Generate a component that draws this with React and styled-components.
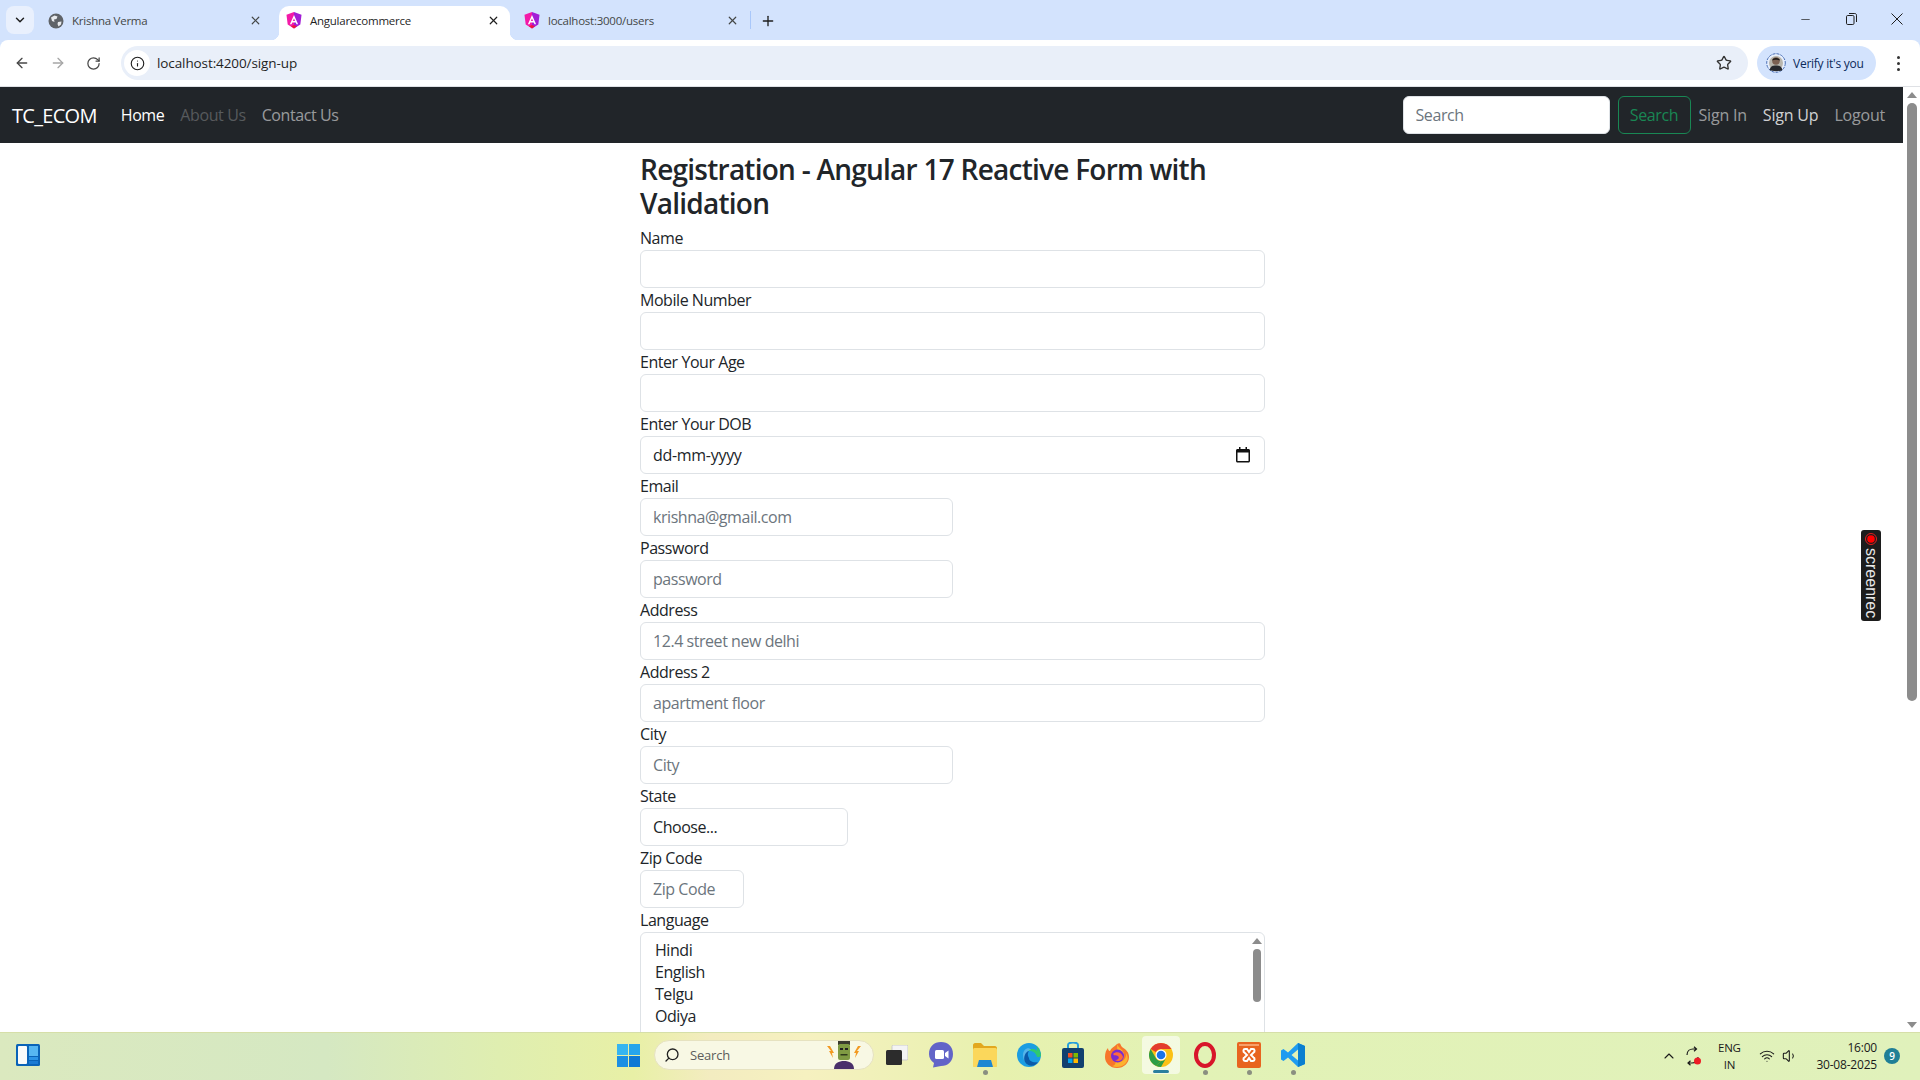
import React from "react";
import styled, { createGlobalStyle } from "styled-components";
import { ArrowLeft, ArrowRight, RotateCw, Info, Star, X, Plus, ChevronDown, Minus, ChevronUp, Search as SearchIcon, Wifi, Volume1 } from "lucide-react";

const GlobalStyle = createGlobalStyle`
  html, body {
    margin: 0;
    height: 100%;
    overflow: hidden;
  }
  body {
    font-family: "Open Sans", "Noto Sans", sans-serif;
    color: #212529;
  }
  * {
    box-sizing: border-box;
  }
`;

const Screen = styled.div`
  width: 1920px;
  height: 1080px;
  display: flex;
  flex-direction: column;
  overflow: hidden;
  background: #d3e3fd;
`;

/* browser chrome */
const TabStrip = styled.div`
  height: 40px;
  flex: none;
  background: #d3e3fd;
  display: flex;
  align-items: flex-end;
  padding-left: 6px;
`;

const TabMenu = styled.div`
  width: 28px;
  height: 28px;
  margin: 0 6px 6px 0;
  border-radius: 8px;
  background: #e9f0fd;
  display: flex;
  align-items: center;
  justify-content: center;
  color: #1f1f1f;
`;

const Tab = styled.div`
  position: relative;
  width: ${(p) => p.$width}px;
  height: 34px;
  display: flex;
  align-items: center;
  gap: 8px;
  padding: 0 ${(p) => p.$right}px 5px ${(p) => p.$left}px;
  border-radius: 10px 10px 0 0;
  background: ${(p) => (p.$active ? "#fff" : "transparent")};
  font-size: 11.5px;
  letter-spacing: -0.25px;
  color: ${(p) => (p.$active ? "#1f1f1f" : "#444746")};
  ${(p) =>
    p.$active &&
    `
    &::before, &::after {
      content: "";
      position: absolute;
      bottom: 0;
      width: 8px;
      height: 8px;
    }
    &::before {
      left: -8px;
      background: radial-gradient(circle at 0 0, transparent 8px, #fff 8.5px);
    }
    &::after {
      right: -8px;
      background: radial-gradient(circle at 100% 0, transparent 8px, #fff 8.5px);
    }
  `}
`;

const TabTitle = styled.span`
  flex: 1;
  white-space: nowrap;
`;

const TabDivider = styled.div`
  width: 1px;
  height: 18px;
  background: #a8c7fa;
  margin: 0 9px 11px 0;
`;

const NewTab = styled.div`
  height: 34px;
  display: flex;
  align-items: center;
  padding-bottom: 4px;
  color: #1f1f1f;
`;

const WindowControls = styled.div`
  margin-left: auto;
  height: 40px;
  display: flex;
  align-items: center;
  padding-right: 17px;
  padding-bottom: 2px;
  gap: 34px;
  color: #1f1f1f;
`;

const Toolbar = styled.div`
  height: 46px;
  flex: none;
  display: flex;
  align-items: center;
  background: #fff;
  border-radius: 8px 8px 0 0;
  padding: 0 0 0 14px;
`;

const NavButton = styled.div`
  width: 16px;
  margin-right: ${(p) => p.$gap}px;
  display: flex;
  color: ${(p) => p.$color || "#474747"};
`;

const Omnibox = styled.div`
  width: 1627px;
  height: 34px;
  margin-left: 5px;
  border-radius: 17px;
  background: #e9eff9;
  display: flex;
  align-items: center;
  padding: 0 16px 0 3px;
`;

const SiteInfo = styled.div`
  width: 26px;
  height: 26px;
  border-radius: 50%;
  background: #fff;
  display: flex;
  align-items: center;
  justify-content: center;
  color: #1f1f1f;
`;

const UrlText = styled.span`
  margin-left: 7px;
  flex: 1;
  font-size: 13.5px;
  letter-spacing: -0.1px;
  color: #1f1f1f;
`;

const ProfilePill = styled.div`
  width: 119px;
  height: 34px;
  margin-left: 9px;
  border-radius: 17px;
  background: #d3e3fd;
  display: flex;
  align-items: center;
  gap: 7px;
  padding-left: 9px;
  font-size: 12px;
  letter-spacing: -0.25px;
  color: #0b2a5b;
  white-space: nowrap;
`;

const MenuDots = styled.div`
  margin-left: 21px;
  display: flex;
  flex-direction: column;
  gap: 3px;
  span {
    width: 3px;
    height: 3px;
    border-radius: 50%;
    background: #333;
  }
`;

const ToolbarEdge = styled.div`
  height: 1px;
  flex: none;
  background: #dfe1e5;
`;

/* page */
const Viewport = styled.div`
  flex: 1;
  min-height: 0;
  display: flex;
  position: relative;
  background: #fff;
`;

const PageArea = styled.div`
  flex: 1;
  min-width: 0;
  overflow: hidden;
`;

const Navbar = styled.nav`
  height: 56px;
  background: #212529;
  display: flex;
  align-items: center;
  padding: 0 10px 0 12px;
`;

const Brand = styled.span`
  font-size: 20px;
  letter-spacing: -0.7px;
  color: #fff;
  margin-right: 16px;
`;

const NavLink = styled.span`
  padding: 8px;
  font-size: 16px;
  letter-spacing: -0.4px;
  white-space: nowrap;
  color: ${(p) => p.$color || "rgba(255, 255, 255, 0.55)"};
`;

const AccountLink = styled(NavLink)`
  letter-spacing: -0.2px;
`;

const NavForm = styled.form`
  margin-left: auto;
  display: flex;
  gap: 8px;
`;

const NavSearch = styled.input`
  width: 207px;
  height: 38px;
  padding: 6px 12px;
  border: 1px solid #dee2e6;
  border-radius: 6px;
  background: #fff;
  font: inherit;
  font-size: 16px;
  letter-spacing: -0.4px;
  outline: none;
  &::placeholder {
    color: #6c757d;
    opacity: 1;
  }
`;

const NavSubmit = styled.button`
  width: 73px;
  height: 38px;
  border: 1px solid #198754;
  border-radius: 6px;
  background: transparent;
  color: #198754;
  font: inherit;
  font-size: 16px;
  letter-spacing: -0.4px;
  padding: 0;
`;

const FormColumn = styled.form`
  width: 625px;
  margin-left: 640px;
  padding-top: 10px;
`;

const Heading = styled.h3`
  margin: 0 0 6px;
  font-size: 28px;
  font-weight: 600;
  line-height: 1.2;
  letter-spacing: -0.75px;
  color: #212529;
`;

const Field = styled.div`
  width: ${(p) => ((p.$span || 12) / 12) * 100}%;
`;

const Label = styled.label`
  display: block;
  font-size: 16px;
  line-height: 24px;
  letter-spacing: -0.45px;
  white-space: nowrap;
`;

const TextInput = styled.input`
  display: block;
  width: 100%;
  height: 38px;
  padding: 6px 12px;
  border: 1px solid #dee2e6;
  border-radius: 6px;
  background: #fff;
  font: inherit;
  font-size: 16px;
  letter-spacing: -0.45px;
  color: #212529;
  outline: none;
  &::placeholder {
    color: #6c757d;
    opacity: 1;
  }
`;

const DateBox = styled.div`
  height: 38px;
  padding: 0 14px 0 12px;
  border: 1px solid #dee2e6;
  border-radius: 6px;
  display: flex;
  align-items: center;
  justify-content: space-between;
  font-size: 16px;
  letter-spacing: -0.3px;
`;

const Select = styled.select`
  display: block;
  width: 100%;
  height: 38px;
  padding: 6px 12px;
  border: 1px solid #dee2e6;
  border-radius: 6px;
  background: #fff;
  appearance: none;
  font: inherit;
  font-size: 16px;
  letter-spacing: -0.45px;
  color: #212529;
  outline: none;
`;

const ListBox = styled.div`
  height: 130px;
  border: 1px solid #dee2e6;
  border-radius: 6px;
  padding: 6px 1px 0 12px;
  display: flex;
  justify-content: space-between;
`;

const ListOptions = styled.div`
  padding: 0 0 0 2px;
`;

const ListOption = styled.div`
  height: 22px;
  line-height: 22px;
  font-size: 16px;
  letter-spacing: -0.45px;
`;

const Scrollbar = styled.div`
  width: ${(p) => p.$width}px;
  flex: none;
  display: flex;
  flex-direction: column;
  align-items: center;
  background: #fff;
`;

const ScrollThumb = styled.div`
  width: ${(p) => p.$width}px;
  height: ${(p) => p.$height}px;
  border-radius: 5px;
  background: #8c8c8c;
`;

const ArrowUp = styled.div`
  width: 0;
  height: 0;
  margin-top: ${(p) => p.$top}px;
  margin-bottom: ${(p) => p.$bottom}px;
  border-left: 5px solid transparent;
  border-right: 5px solid transparent;
  border-bottom: 6px solid #8c8c8c;
`;

const ArrowDown = styled.div`
  width: 0;
  height: 0;
  margin-top: auto;
  margin-bottom: ${(p) => p.$bottom}px;
  border-left: 5px solid transparent;
  border-right: 5px solid transparent;
  border-top: 6px solid #8c8c8c;
`;

const RecBadge = styled.div`
  position: absolute;
  left: 1861px;
  top: 443px;
  width: 20px;
  height: 91px;
  border-radius: 3px;
  background: #1c1c1c;
  display: flex;
  flex-direction: column;
  align-items: center;
  padding-top: 3px;
  gap: 3px;
`;

const RecText = styled.span`
  writing-mode: vertical-rl;
  font-family: "Liberation Sans", sans-serif;
  font-size: 16px;
  line-height: 20px;
  color: #e8e8e8;
`;

/* taskbar */
const Taskbar = styled.div`
  height: 48px;
  flex: none;
  display: flex;
  align-items: center;
  padding-bottom: 3px;
  border-top: 1px solid #d6dfa8;
  background: linear-gradient(90deg, #dbe9bf 0%, #d5e8c2 17%, #dfeeb0 26%, #e8f0a6 33%, #f3ecc0 37%, #f6f1c0 42%, #e7f1ae 52%, #e2f2b6 62%, #e0f1bb 100%);
`;

const WidgetSlot = styled.div`
  width: 617px;
  flex: none;
  padding-left: 16px;
  display: flex;
`;

const StartSlot = styled.div`
  width: 37px;
  flex: none;
  display: flex;
`;

const TaskSearch = styled.div`
  width: 220px;
  height: 30px;
  flex: none;
  margin-right: 1px;
  border-radius: 15px;
  border: 1px solid #e6e2c0;
  background: #f8f8e4;
  display: flex;
  align-items: center;
  padding-left: 9px;
  gap: 10px;
  font-size: 13px;
  letter-spacing: -0.2px;
  color: #5c5c5c;
  position: relative;
  overflow: hidden;
`;

const TaskArt = styled.div`
  position: absolute;
  right: 10px;
  bottom: 0;
  display: flex;
`;

const AppSlot = styled.div`
  width: ${(p) => (p.$active ? 38 : 44)}px;
  margin: ${(p) => (p.$active ? "0 3px" : "0")};
  height: 38px;
  flex: none;
  position: relative;
  display: flex;
  align-items: center;
  justify-content: center;
  border-radius: 4px;
  background: ${(p) => (p.$active ? "rgba(255,255,255,0.6)" : "transparent")};
`;

const AppDot = styled.span`
  position: absolute;
  left: 50%;
  bottom: ${(p) => (p.$active ? 1 : -1)}px;
  width: ${(p) => (p.$active ? 16 : 5)}px;
  height: ${(p) => (p.$active ? 3 : 5)}px;
  margin-left: ${(p) => (p.$active ? -8 : -2.5)}px;
  border-radius: 3px;
  background: ${(p) => (p.$active ? "#2a7f9e" : "#8a8f80")};
`;

const Tray = styled.div`
  margin-left: auto;
  padding-top: 2px;
  display: flex;
  align-items: center;
  color: #1a1a1a;
`;

const TrayIcon = styled.div`
  display: flex;
  margin-right: ${(p) => p.$gap || 0}px;
`;

const Lang = styled.div`
  width: 30px;
  margin-right: 15px;
  text-align: center;
  font-size: 11.5px;
  line-height: 17px;
  letter-spacing: -0.2px;
`;

const Clock = styled.div`
  text-align: right;
  font-size: 12px;
  line-height: 17px;
  letter-spacing: -0.2px;
  margin-right: 7px;
`;

const CountBadge = styled.div`
  width: 16px;
  height: 16px;
  margin-right: 20px;
  border-radius: 50%;
  background: #1f7f96;
  color: #fff;
  font-size: 10px;
  font-weight: 600;
  display: flex;
  align-items: center;
  justify-content: center;
`;

/* drawings */
const AngularMark = () => (
  <svg width="16" height="18" viewBox="0 0 16 18">
    <path d="M8 0 15.500 2.700 14.300 12.600 8 16.500Z" fill="#a21ed6" />
    <path d="M8 0 .5 2.700 1.700 12.600 8 16.500Z" fill="#f31aa8" />
    <path d="M8 3 3.900 12.300H5.500L6.300 10.400H9.700L10.500 12.300H12.100Z" fill="#fff" />
    <path d="M6.900 9 8 6.400 9.100 9Z" fill="#e01aa8" />
    <path d="M5 14.300 8 16.500 11 14.300 8 12.900Z" fill="#f0143c" />
  </svg>
);

const GlobeMark = () => (
  <svg width="16" height="16" viewBox="0 0 16 16">
    <circle cx="8" cy="8" r="7.500" fill="#5f6368" />
    <path d="M3 4.500 6.500 2.500 9.500 3.500 8.500 6 6 6.500 6.500 9 4 8ZM10 9 13.500 8.500 13 11.500 10.500 13.500 9.500 11Z" fill="#e8eaed" />
  </svg>
);

const RestoreIcon = () => (
  <svg width="11" height="12" viewBox="0 0 11 12" fill="none" stroke="#1f1f1f">
    <rect x=".5" y="2.500" width="7.500" height="9" rx="1.200" />
    <path d="M3 .5H8.800C9.800.5 10.500 1.200 10.500 2.200V9" />
  </svg>
);

const CloseIcon = () => (
  <svg width="12" height="12" viewBox="0 0 12 12" stroke="#1f1f1f">
    <path d="M.5.5 11.500 11.500M11.500.5.500 11.500" />
  </svg>
);

const Avatar = () => (
  <svg width="20" height="20" viewBox="0 0 20 20">
    <circle cx="10" cy="10" r="9.300" fill="#e6eefc" stroke="#4a6fb5" strokeDasharray="3 1" />
    <circle cx="10" cy="10" r="7" fill="#b9b6ad" />
    <path d="M3.500 17C4.500 13 7 12.500 10 12.500S15.500 13 16.500 17C14 18.500 6 18.500 3.500 17Z" fill="#27282c" />
    <circle cx="10" cy="8" r="3.800" fill="#7c6152" />
    <path d="M6.200 7.500C6 4 14 4 13.800 7.500 12 6.500 8 6.500 6.200 7.500Z" fill="#1d1a18" />
  </svg>
);

const CalendarIcon = () => (
  <svg width="14" height="16" viewBox="0 0 14 16">
    <path d="M3 0h1.500v2h5V0H11v2h1.500C13.300 2 14 2.700 14 3.500v10.500c0 .8-.7 1.500-1.500 1.500h-11C.7 15.500 0 14.800 0 14V3.500C0 2.700.7 2 1.500 2H3ZM1.500 5.500V14h11V5.500Z" fill="#111" />
  </svg>
);

const WidgetIcon = () => (
  <svg width="24" height="22" viewBox="0 0 24 22">
    <rect width="24" height="22" rx="1.500" fill="#0a63b8" />
    <rect x="2" y="2" width="9" height="18" rx="1" fill="#fafafa" />
    <rect x="13" y="2" width="9" height="10" fill="#56b6f2" />
    <rect x="13" y="13" width="9" height="3" fill="#2b93e6" />
    <rect x="13" y="17" width="9" height="3" fill="#1a7ad4" />
  </svg>
);

const WinLogo = () => (
  <svg width="23" height="23" viewBox="0 0 23 23">
    <rect width="11" height="11" fill="#36b5f0" />
    <rect x="12" width="11" height="11" fill="#26a5ec" />
    <rect y="12" width="11" height="11" fill="#1b8fe3" />
    <rect x="12" y="12" width="11" height="11" fill="#0f78d4" />
  </svg>
);

const MonsterArt = () => (
  <svg width="38" height="30" viewBox="0 0 38 30">
    <path d="M2 7 6 12 4 12 8 19 7 14 9 14 5 7ZM36 7 32 12 34 12 30 19 31 14 29 14 33 7Z" fill="#f39a23" />
    <path d="M9 30C9 24 14 22 19 22S29 24 29 30Z" fill="#4a2f6b" />
    <rect x="13" y="2" width="12" height="4" fill="#3a3a2e" />
    <rect x="13" y="5" width="12" height="16" rx="2" fill="#7f9a43" />
    <rect x="15" y="9" width="3" height="2" fill="#222" />
    <rect x="20" y="9" width="3" height="2" fill="#222" />
    <rect x="15.500" y="15" width="7" height="1.500" fill="#2f3a1b" />
  </svg>
);

const TaskViewIcon = () => (
  <svg width="22" height="20" viewBox="0 0 22 20">
    <rect x="6" width="16" height="15" rx="1.500" fill="#f4f4f4" stroke="#c9c9c9" />
    <rect y="5" width="16" height="15" rx="1.500" fill="#2c2c2c" />
  </svg>
);

const ChatIcon = () => (
  <svg width="24" height="26" viewBox="0 0 24 26">
    <path d="M12 0C19 0 24 4.500 24 12S19 24 12 24L4 25.500 5 21C2 19 0 16 0 12 0 4.500 5 0 12 0Z" fill="#6264c8" />
    <rect x="6" y="8" width="9" height="9" rx="1.500" fill="#fff" />
    <path d="M16 11 19.500 8.500V16.500L16 14Z" fill="#fff" />
  </svg>
);

const FolderIcon = () => (
  <svg width="24" height="24" viewBox="0 0 24 24">
    <path d="M0 2C0 1 1 0 2 0H8L11 3H22C23 3 24 4 24 5V22C24 23 23 24 22 24H2C1 24 0 23 0 22Z" fill="#e2a81f" />
    <rect y="5" width="24" height="19" rx="1.500" fill="#fbd75b" />
    <path d="M6 17H18L20 24H4Z" fill="#1e88d2" />
  </svg>
);

const EdgeIcon = () => (
  <svg width="24" height="24" viewBox="0 0 24 24">
    <circle cx="12" cy="12" r="12" fill="#1b9de2" />
    <path d="M24 13C24 6 18 0 12 0 18 0 21 4 20 8 19 6 14 5 11 8 14 7 19 9 20 14 21 14 23 14 24 13Z" fill="#2fc96f" />
    <path d="M6 12C6 6 12 3 14 7 10 7 9 11 10 15 11 19 16 21 21 19 17 25 6 23 6 12Z" fill="#fff" opacity=".25" />
    <path d="M12 15C12 18 16 20 21 19 18 24 11 24 8 19 6 15 8 9 12 8 10 11 11 13 12 15Z" fill="#0b5aa8" />
  </svg>
);

const StoreIcon = () => (
  <svg width="22" height="26" viewBox="0 0 22 26">
    <path d="M6 7V3C6 1 8 .5 11 .5S16 1 16 3V7" fill="none" stroke="#27a0dc" strokeWidth="2" />
    <rect y="6" width="22" height="20" rx="2" fill="#11406f" />
    <rect x="6" y="11" width="4.500" height="4.500" fill="#f25022" />
    <rect x="11.500" y="11" width="4.500" height="4.500" fill="#7fba00" />
    <rect x="6" y="16.500" width="4.500" height="4.500" fill="#00a4ef" />
    <rect x="11.500" y="16.500" width="4.500" height="4.500" fill="#ffb900" />
  </svg>
);

const FirefoxIcon = () => (
  <svg width="24" height="26" viewBox="0 0 24 26">
    <path d="M12 2C16 0 15 3 17 5 22 8 24 11 24 15 24 21 19 26 12 26S0 21 0 15C0 11 1 8 3 6 3 8 4 9 5 9 6 6 9 5 12 2Z" fill="#f7762b" />
    <path d="M12 2C13 6 18 7 19 12 20 17 15 22 9 20 15 22 22 18 21 11 23 14 24 18 20 22 17 25 11 26 7 24 14 24 12 4 12 2Z" fill="#fcb22d" />
    <circle cx="12.500" cy="14" r="6.500" fill="#7a2bd0" />
    <path d="M8 12C11 9 17 10 18 15 17 19 13 20 10 18 13 18 15 16 13 14 11 13 9 14 8 12Z" fill="#ff6a3c" />
  </svg>
);

const ChromeIcon = () => (
  <svg width="24" height="24" viewBox="0 0 24 24">
    <circle cx="12" cy="12" r="12" fill="#fbc116" />
    <path d="M12 0A12 12 0 0 1 22.400 6H12A6 6 0 0 0 6.800 9L1.600 6A12 12 0 0 1 12 0Z" fill="#e33b2e" />
    <path d="M1.600 6 6.800 15A6 6 0 0 0 12 18L6.800 22.800A12 12 0 0 1 1.600 6Z" fill="#2d9d47" />
    <path d="M6.800 22.800 12 18A6 6 0 0 0 17.200 15L12 24A12 12 0 0 1 6.800 22.800Z" fill="#2d9d47" />
    <circle cx="12" cy="12" r="5.500" fill="#fff" />
    <circle cx="12" cy="12" r="4.300" fill="#1a73e8" />
  </svg>
);

const OperaIcon = () => (
  <svg width="22" height="26" viewBox="0 0 22 26">
    <ellipse cx="11" cy="13" rx="9" ry="11" fill="none" stroke="#d8152a" strokeWidth="4" />
  </svg>
);

const XamppIcon = () => (
  <svg width="24" height="26" viewBox="0 0 24 26">
    <rect width="24" height="26" rx="2" fill="#e8641f" />
    <rect x="2" y="2" width="20" height="2" fill="#f6a06b" />
    <path d="M8 7H10L12 10 14 7H16C18 7 18 10 16.500 10.500L14 13 16.500 15.500C18 16 18 19 16 19H14L12 16 10 19H8C6 19 6 16 7.500 15.500L10 13 7.500 10.500C6 10 6 7 8 7Z" fill="none" stroke="#fff" strokeWidth="2" />
  </svg>
);

const CodeIcon = () => (
  <svg width="24" height="24" viewBox="0 0 24 24">
    <path d="M17 0 24 3V21L17 24 7 14.500 2.500 18 0 16.500V7.500L2.500 6 7 9.500ZM17 6.500 10.500 12 17 17.500Z" fill="#1f9cf0" />
    <path d="M17 0 24 3V21L17 24Z" fill="#0a7fd0" />
  </svg>
);

const SyncIcon = () => (
  <svg width="18" height="20" viewBox="0 0 18 20" fill="none" stroke="#1a1a1a" strokeWidth="1.200">
    <path d="M3 9C3 5 6 3 9 3H12M10 .8 12.500 3 10 5.200" />
    <path d="M14 11C14 15 11 17 8 17H4M6.500 14.800 4 17 6.500 19.200" />
    <circle cx="13.500" cy="15" r="3.500" fill="#ee1c25" stroke="none" />
  </svg>
);

const names = ["Name", "Mobile Number", "Enter Your Age"];

const App = () => {
  return (
    <Screen>
      <GlobalStyle />
      <TabStrip>
        <TabMenu>
          <ChevronDown size={14} strokeWidth={2.5} />
        </TabMenu>
        <Tab $width={239} $left={8} $right={17}>
          <GlobeMark />
          <TabTitle>Krishna Verma</TabTitle>
          <X size={13} strokeWidth={2.2} />
        </Tab>
        <Tab $width={231} $left={7} $right={10} $active>
          <AngularMark />
          <TabTitle>Angularecommerce</TabTitle>
          <X size={13} strokeWidth={2.2} color="#1f1f1f" />
        </Tab>
        <Tab $width={240} $left={14} $right={11}>
          <AngularMark />
          <TabTitle>localhost:3000/users</TabTitle>
          <X size={13} strokeWidth={2.2} />
        </Tab>
        <TabDivider />
        <NewTab>
          <Plus size={16} strokeWidth={2} />
        </NewTab>
        <WindowControls>
          <Minus size={13} strokeWidth={1.3} />
          <RestoreIcon />
          <CloseIcon />
        </WindowControls>
      </TabStrip>
      <Toolbar>
        <NavButton $gap={20}>
          <ArrowLeft size={16} strokeWidth={2} />
        </NavButton>
        <NavButton $gap={20} $color="#a6a6a6">
          <ArrowRight size={16} strokeWidth={2} />
        </NavButton>
        <NavButton $gap={14}>
          <RotateCw size={15} strokeWidth={2} />
        </NavButton>
        <Omnibox>
          <SiteInfo>
            <Info size={15} strokeWidth={1.8} />
          </SiteInfo>
          <UrlText>localhost:4200/sign-up</UrlText>
          <Star size={16} strokeWidth={2} color="#333" />
        </Omnibox>
        <ProfilePill>
          <Avatar />
          Verify it's you
        </ProfilePill>
        <MenuDots>
          <span />
          <span />
          <span />
        </MenuDots>
      </Toolbar>
      <ToolbarEdge />
      <Viewport>
        <PageArea>
          <Navbar>
            <Brand>TC_ECOM</Brand>
            <NavLink $color="#fff">Home</NavLink>
            <NavLink $color="rgba(255, 255, 255, 0.25)">About Us</NavLink>
            <NavLink>Contact Us</NavLink>
            <NavForm>
              <NavSearch placeholder="Search" />
              <NavSubmit type="button">Search</NavSubmit>
            </NavForm>
            <AccountLink>Sign In</AccountLink>
            <AccountLink $color="rgba(255, 255, 255, 0.8)">Sign Up</AccountLink>
            <AccountLink>Logout</AccountLink>
          </Navbar>
          <FormColumn>
            <Heading>Registration - Angular 17 Reactive Form with Validation</Heading>
            {names.map((name) => (
              <Field key={name}>
                <Label>{name}</Label>
                <TextInput />
              </Field>
            ))}
            <Field>
              <Label>Enter Your DOB</Label>
              <DateBox>
                dd-mm-yyyy
                <CalendarIcon />
              </DateBox>
            </Field>
            <Field $span={6}>
              <Label>Email</Label>
              <TextInput placeholder="krishna@gmail.com" />
            </Field>
            <Field $span={6}>
              <Label>Password</Label>
              <TextInput placeholder="password" />
            </Field>
            <Field>
              <Label>Address</Label>
              <TextInput placeholder="12.4 street new delhi" />
            </Field>
            <Field>
              <Label>Address 2</Label>
              <TextInput placeholder="apartment floor" />
            </Field>
            <Field $span={6}>
              <Label>City</Label>
              <TextInput placeholder="City" />
            </Field>
            <Field $span={4}>
              <Label>State</Label>
              <Select defaultValue="choose">
                <option value="choose">Choose...</option>
              </Select>
            </Field>
            <Field $span={2}>
              <Label>Zip Code</Label>
              <TextInput placeholder="Zip Code" />
            </Field>
            <Field>
              <Label>Language</Label>
              <ListBox>
                <ListOptions>
                  <ListOption>Hindi</ListOption>
                  <ListOption>English</ListOption>
                  <ListOption>Telgu</ListOption>
                  <ListOption>Odiya</ListOption>
                </ListOptions>
                <Scrollbar $width={12}>
                  <ArrowUp $top={-1} $bottom={5} />
                  <ScrollThumb $width={8} $height={53} />
                </Scrollbar>
              </ListBox>
            </Field>
          </FormColumn>
        </PageArea>
        <Scrollbar $width={17}>
          <ArrowUp $top={5} $bottom={5} />
          <ScrollThumb $width={10} $height={598} />
          <ArrowDown $bottom={4} />
        </Scrollbar>
        <RecBadge>
          <svg width="12" height="12" viewBox="0 0 12 12">
            <circle cx="6" cy="6" r="5.500" fill="none" stroke="#e02020" />
            <circle cx="6" cy="6" r="3.800" fill="#f00" />
          </svg>
          <RecText>screenrec</RecText>
        </RecBadge>
      </Viewport>
      <Taskbar>
        <WidgetSlot>
          <WidgetIcon />
        </WidgetSlot>
        <StartSlot>
          <WinLogo />
        </StartSlot>
        <TaskSearch>
          <SearchIcon size={16} strokeWidth={2} color="#222" style={{ transform: "scaleX(-1)" }} />
          Search
          <TaskArt>
            <MonsterArt />
          </TaskArt>
        </TaskSearch>
        <AppSlot>
          <TaskViewIcon />
        </AppSlot>
        <AppSlot>
          <ChatIcon />
        </AppSlot>
        <AppSlot>
          <FolderIcon />
          <AppDot />
        </AppSlot>
        <AppSlot>
          <EdgeIcon />
        </AppSlot>
        <AppSlot>
          <StoreIcon />
        </AppSlot>
        <AppSlot>
          <FirefoxIcon />
        </AppSlot>
        <AppSlot $active>
          <ChromeIcon />
          <AppDot $active />
        </AppSlot>
        <AppSlot>
          <OperaIcon />
          <AppDot />
        </AppSlot>
        <AppSlot>
          <XamppIcon />
          <AppDot />
        </AppSlot>
        <AppSlot>
          <CodeIcon />
          <AppDot />
        </AppSlot>
        <Tray>
          <TrayIcon $gap={7}>
            <ChevronUp size={16} strokeWidth={1.6} />
          </TrayIcon>
          <TrayIcon $gap={12}>
            <SyncIcon />
          </TrayIcon>
          <Lang>
            ENG
            <br />
            IN
          </Lang>
          <TrayIcon $gap={7}>
            <Wifi size={16} strokeWidth={1.6} />
          </TrayIcon>
          <TrayIcon $gap={18}>
            <Volume1 size={16} strokeWidth={1.6} />
          </TrayIcon>
          <Clock>
            16:00
            <br />
            30-08-2025
          </Clock>
          <CountBadge>9</CountBadge>
        </Tray>
      </Taskbar>
    </Screen>
  );
};

export default App;
